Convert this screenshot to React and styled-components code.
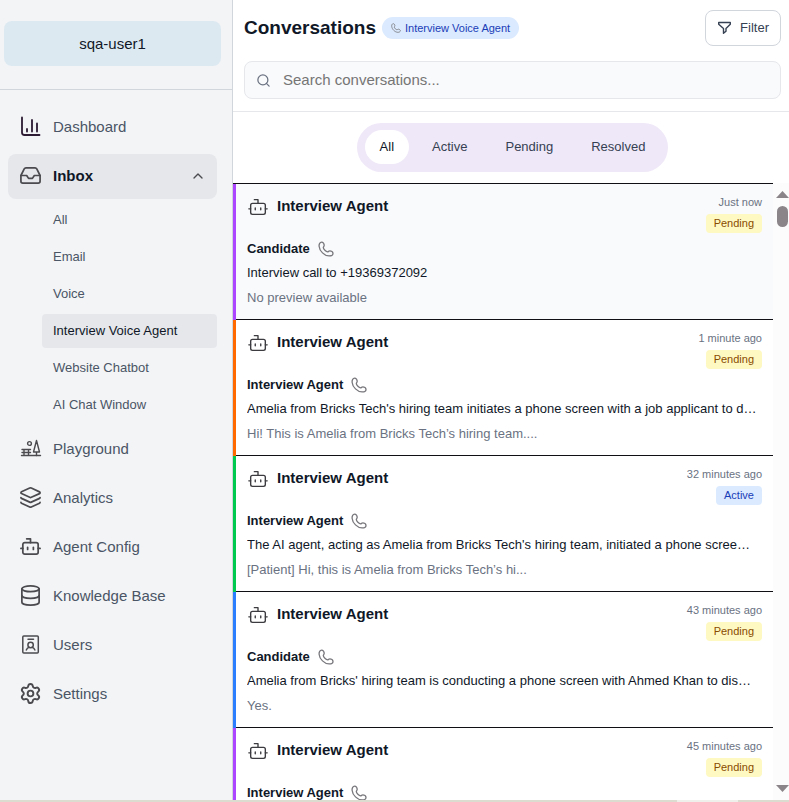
import React, { useState } from 'react';
import styled, { createGlobalStyle } from 'styled-components';
import { Inbox, Layers, Bot, Database, Settings, ChevronUp, ChevronDown, Search } from 'lucide-react';

const GlobalStyle = createGlobalStyle`
    * {
        box-sizing: border-box;
    }
    body {
        margin: 0;
        font-family: "Liberation Sans", Arial, sans-serif;
        color: #101828;
        background: #ffffff;
    }
    button, input {
        font-family: inherit;
    }
    h1, h2, p, ul {
        margin: 0;
        padding: 0;
    }
    ul {
        list-style: none;
    }
`;

const Page = styled.div`
    display: flex;
    flex-direction: column;
    height: 100vh;
    overflow: hidden;
`;

const Columns = styled.div`
    display: flex;
    flex: 1;
    min-height: 0;
`;

const BottomStrip = styled.div`
    display: flex;
    justify-content: flex-end;
    flex: none;
    height: 2px;
    padding-right: 51px;
    background: #dcddd0;
`;

const StripHandle = styled.div`
    width: 61px;
    background: #efefec;
`;

const Sidebar = styled.aside`
    flex: none;
    width: 233px;
    background: #f3f4f6;
    border-right: 1px solid #d1d5dc;
`;

const Account = styled.div`
    padding: 21px 11px 23px 4px;
    border-bottom: 1px solid #d1d5dc;
`;

const AccountButton = styled.button`
    display: block;
    width: 100%;
    height: 45px;
    border: none;
    border-radius: 8px;
    background: #dde9f1;
    color: #101828;
    font-size: 15px;
    cursor: pointer;
`;

const NavList = styled.ul`
    display: flex;
    flex-direction: column;
    gap: 4px;
    padding: 15px 15px 0 8px;
`;

const NavLink = styled.a`
    display: flex;
    align-items: center;
    gap: 11px;
    height: 45px;
    padding: 0 11px 2px;
    border-radius: 8px;
    font-size: 15px;
    text-decoration: none;
    font-weight: ${({ $active }) => ($active ? 700 : 400)};
    color: ${({ $active }) => ($active ? '#101828' : '#4a5565')};
    background: ${({ $active }) => ($active ? '#e5e7eb' : 'transparent')};
    & svg {
        flex: none;
        color: #4b4b4f;
    }
    & span {
        flex: 1;
    }
`;

const SubList = styled.ul`
    display: flex;
    flex-direction: column;
    gap: 3px;
    padding: 4px 0 1px 34px;
`;

const SubLink = styled.a`
    display: block;
    padding: 0 11px;
    border-radius: 4px;
    font-size: 13px;
    line-height: 34px;
    text-decoration: none;
    color: ${({ $active }) => ($active ? '#101828' : '#4a5565')};
    background: ${({ $active }) => ($active ? '#e5e7eb' : 'transparent')};
`;

const Main = styled.main`
    display: flex;
    flex-direction: column;
    flex: 1;
    min-width: 0;
`;

const Header = styled.header`
    padding: 10px 8px 12px 11px;
    border-bottom: 1px solid #e5e7eb;
`;

const TitleRow = styled.div`
    display: flex;
    align-items: center;
    gap: 6px;
    margin-bottom: 15px;
`;

const Title = styled.h1`
    font-size: 19px;
    line-height: 24px;
`;

const Chip = styled.span`
    display: flex;
    align-items: center;
    gap: 4px;
    height: 22px;
    padding: 0 9px;
    border-radius: 11px;
    background: #dbeafe;
    color: #193cb8;
    font-size: 11px;
    & svg {
        color: #77777c;
    }
`;

const FilterButton = styled.button`
    display: flex;
    align-items: center;
    gap: 8px;
    height: 36px;
    margin-left: auto;
    padding: 0 11px 2px;
    border: 1px solid #d1d5dc;
    border-radius: 8px;
    background: #ffffff;
    color: #364153;
    font-size: 13px;
    cursor: pointer;
`;

const SearchBox = styled.label`
    display: flex;
    align-items: center;
    gap: 12px;
    height: 38px;
    padding: 0 11px;
    border: 1px solid #e5e7eb;
    border-radius: 8px;
    background: #f9fafb;
    & svg {
        flex: none;
        color: #6a7282;
    }
`;

const SearchInput = styled.input`
    flex: 1;
    min-width: 0;
    padding: 0 0 2px;
    border: none;
    outline: none;
    background: none;
    font-size: 15px;
    color: #101828;
    &::placeholder {
        color: #757575;
    }
`;

const TabBar = styled.div`
    display: flex;
    justify-content: center;
    padding: 11px 8px 11px 11px;
`;

const Tabs = styled.div`
    display: flex;
    gap: 8px;
    padding: 7px 8px 8px;
    border-radius: 25px;
    background: #efe8f8;
`;

const Tab = styled.button`
    height: 34px;
    padding: 0 15px 2px;
    border: none;
    border-radius: 17px;
    font-size: 13px;
    cursor: pointer;
    color: ${({ $active }) => ($active ? '#101828' : '#364153')};
    background: ${({ $active }) => ($active ? '#ffffff' : 'transparent')};
`;

const ListArea = styled.div`
    display: flex;
    flex: 1;
    min-height: 0;
`;

const CardList = styled.ul`
    flex: 1;
    min-width: 0;
    overflow: hidden;
    border-top: 1px solid #101014;
`;

const Card = styled.li`
    padding: 11px 11px 10px;
    border-left: 3px solid ${({ $accent }) => $accent};
    background: ${({ $selected }) => ($selected ? '#f9fafb' : '#ffffff')};
    box-shadow: inset 0 -1px 0 #101014;
`;

const CardHead = styled.div`
    display: flex;
    justify-content: space-between;
    margin-bottom: 4px;
`;

const CardTitle = styled.div`
    display: flex;
    align-items: flex-end;
    gap: 8px;
    height: 23px;
    & svg {
        color: #3c3c40;
    }
    & h2 {
        font-size: 15px;
        line-height: 24px;
    }
`;

const CardStatus = styled.div`
    display: flex;
    flex-direction: column;
    align-items: flex-end;
    gap: 5px;
    font-size: 11px;
    line-height: 14px;
    color: #6a7282;
`;

const Badge = styled.span`
    padding: 0 8px;
    border-radius: 4px;
    line-height: 19px;
    color: ${({ $status }) => ($status === 'Active' ? '#193cb8' : '#894b00')};
    background: ${({ $status }) => ($status === 'Active' ? '#dbeafe' : '#fef9c2')};
`;

const Sender = styled.div`
    display: flex;
    align-items: center;
    gap: 8px;
    font-size: 13px;
    font-weight: 700;
    line-height: 24px;
    & svg {
        color: #77777c;
    }
`;

const Line = styled.p`
    overflow: hidden;
    white-space: nowrap;
    text-overflow: ellipsis;
    font-size: 13px;
    line-height: 24px;
    color: #101828;
`;

const Preview = styled(Line)`
    margin-top: 1px;
    color: #6a7282;
`;

const ScrollTrack = styled.div`
    display: flex;
    flex-direction: column;
    align-items: center;
    flex: none;
    width: 16px;
    padding: 8px 0 8px 3px;
    background: #fcfcfc;
    color: #8b8589;
`;

const ScrollThumb = styled.div`
    width: 11px;
    height: 21px;
    margin: 8px 0 auto;
    border-radius: 6px;
    background: #8b8589;
`;

const ChartIcon = () => (
    <svg width="23" height="23" viewBox="-1 0 23 23" fill="none" stroke="#2d1b33" strokeWidth="1.8" strokeLinecap="round" strokeLinejoin="round">
        <path d="M2 2.5v15q0 2.5 2.5 2.5h15" />
        <path d="M7 14v2.5M12 5v11.5M17 8.5v8" />
    </svg>
);

const ParkIcon = () => (
    <svg width="23" height="23" viewBox="-1 0 23 23" fill="none" stroke="currentColor" strokeWidth="1.4" strokeLinecap="round" strokeLinejoin="round">
        <path d="M1.5 18.5h19M2 12.5h8.5M2 15.5h8.5M4 12.5v6M8.500 12.5v6" />
        <circle cx="9.5" cy="6.5" r="1.9" />
        <path d="M16.5 3.5l-3 11.5h6zM16.5 15v3.5" />
    </svg>
);

const BadgeIcon = () => (
    <svg width="23" height="23" viewBox="-1 0 23 23" fill="none" stroke="currentColor" strokeWidth="1.5" strokeLinecap="round" strokeLinejoin="round">
        <rect x="2.8" y="3" width="15.5" height="17" rx="1" />
        <path d="M8 6.3h5.5" />
        <circle cx="10.6" cy="12" r="2.7" />
        <path d="M6.3 17q.8-2 2.8-2.7M14.9 17q-.8-2-2.8-2.7" />
    </svg>
);

const FunnelIcon = () => (
    <svg width="15" height="15" viewBox="0 0 15 15" fill="none" stroke="currentColor" strokeWidth="1.4" strokeLinejoin="round">
        <path d="M1.7 2.5h11.6v1.7L9 8.5v2.7L6.5 13.3V8.5L1.7 4.200z" />
    </svg>
);

const PhoneIcon = ({ size }) => (
    <svg width={size} height={size} viewBox="0 0 16 16" fill="none" stroke="currentColor" strokeWidth="1.3" strokeLinejoin="round">
        <path d="M1.1 5.2C.9 3 2 1.1 3.600 1.100c1.500 0 2.600 1.700 2.600 3.200 0 1-.9 1.500-.9 2.300 0 1.600 2.800 4.200 4.300 4.200.8 0 1.200-.9 2.200-.9 1.500 0 3.200 1.100 3.200 2.500 0 1.500-1.900 2.500-3.900 2.500C6.400 14.900 1.500 10 1.100 5.200z" />
    </svg>
);

const Arrow = ({ down }) => (
    <svg width="13" height="7" viewBox="0 0 13 7" fill="currentColor">
        <path d={down ? 'M0 0h13l-6.5 7z' : 'M0 7h13l-6.5-7z'} />
    </svg>
);

const inboxItems = ['All', 'Email', 'Voice', 'Interview Voice Agent', 'Website Chatbot', 'AI Chat Window'];

const navItems = [
    { label: 'Dashboard', icon: <ChartIcon /> },
    { label: 'Inbox', icon: <Inbox size={23} strokeWidth={1.8} />, children: inboxItems },
    { label: 'Playground', icon: <ParkIcon /> },
    { label: 'Analytics', icon: <Layers size={23} strokeWidth={1.8} /> },
    { label: 'Agent Config', icon: <Bot size={23} strokeWidth={1.8} /> },
    { label: 'Knowledge Base', icon: <Database size={23} strokeWidth={1.8} /> },
    { label: 'Users', icon: <BadgeIcon /> },
    { label: 'Settings', icon: <Settings size={23} strokeWidth={2} /> },
];

const tabs = ['All', 'Active', 'Pending', 'Resolved'];

const conversations = [
    {
        id: 1,
        accent: '#ad46ff',
        time: 'Just now',
        status: 'Pending',
        sender: 'Candidate',
        summary: 'Interview call to +19369372092',
        preview: 'No preview available',
    },
    {
        id: 2,
        accent: '#ff6900',
        time: '1 minute ago',
        status: 'Pending',
        sender: 'Interview Agent',
        summary: 'Amelia from Bricks Tech\'s hiring team initiates a phone screen with a job applicant to d…',
        preview: 'Hi! This is Amelia from Bricks Tech’s hiring team....',
    },
    {
        id: 3,
        accent: '#00c950',
        time: '32 minutes ago',
        status: 'Active',
        sender: 'Interview Agent',
        summary: 'The AI agent, acting as Amelia from Bricks Tech\'s hiring team, initiated a phone scree…',
        preview: '[Patient] Hi, this is Amelia from Bricks Tech’s hi...',
    },
    {
        id: 4,
        accent: '#2b7fff',
        time: '43 minutes ago',
        status: 'Pending',
        sender: 'Candidate',
        summary: 'Amelia from Bricks\' hiring team is conducting a phone screen with Ahmed Khan to dis…',
        preview: 'Yes.',
    },
    {
        id: 5,
        accent: '#ad46ff',
        time: '45 minutes ago',
        status: 'Pending',
        sender: 'Interview Agent',
        summary: '',
        preview: '',
    },
];

const NavItem = ({ item }) => {
    const [ open, setOpen ] = useState(true);

    const handleClick = (e) => {
        e.preventDefault();
        setOpen(!open);
    };

    return (
        <li>
            <NavLink href="#" $active={!!item.children} onClick={handleClick}>
                {item.icon}
                <span>{item.label}</span>
                {item.children && (open ? <ChevronUp size={16} /> : <ChevronDown size={16} />)}
            </NavLink>
            {item.children && open && (
                <SubList>
                    {item.children.map(label => (
                        <li key={label}>
                            <SubLink href="#" $active={label === 'Interview Voice Agent'}>{label}</SubLink>
                        </li>
                    ))}
                </SubList>
            )}
        </li>
    );
};

const Conversation = ({ item, selected }) => (
    <Card $accent={item.accent} $selected={selected}>
        <CardHead>
            <CardTitle>
                <Bot size={22} strokeWidth={1.5} />
                <h2>Interview Agent</h2>
            </CardTitle>
            <CardStatus>
                <span>{item.time}</span>
                <Badge $status={item.status}>{item.status}</Badge>
            </CardStatus>
        </CardHead>
        <Sender>
            {item.sender}
            <PhoneIcon size={16} />
        </Sender>
        <Line>{item.summary}</Line>
        <Preview>{item.preview}</Preview>
    </Card>
);

const App = () => {
    const [ tab, setTab ] = useState('All');
    const [ query, setQuery ] = useState('');

    const visible = conversations.filter(item => (
        (tab === 'All' || item.status === tab)
        && `${item.sender} ${item.summary}`.toLowerCase().includes(query.toLowerCase())
    ));

    return (
        <Page>
            <GlobalStyle />
            <Columns>
                <Sidebar>
                    <Account>
                        <AccountButton type="button">sqa-user1</AccountButton>
                    </Account>
                    <nav>
                        <NavList>
                            {navItems.map(item => <NavItem key={item.label} item={item} />)}
                        </NavList>
                    </nav>
                </Sidebar>
                <Main>
                    <Header>
                        <TitleRow>
                            <Title>Conversations</Title>
                            <Chip>
                                <PhoneIcon size={10} />
                                Interview Voice Agent
                            </Chip>
                            <FilterButton type="button">
                                <FunnelIcon />
                                Filter
                            </FilterButton>
                        </TitleRow>
                        <SearchBox>
                            <Search size={15} strokeWidth={2} />
                            <SearchInput
                                type="text"
                                aria-label="Search conversations"
                                placeholder="Search conversations..."
                                value={query}
                                onChange={e => setQuery(e.target.value)}
                            />
                        </SearchBox>
                    </Header>
                    <TabBar>
                        <Tabs>
                            {tabs.map(name => (
                                <Tab key={name} type="button" $active={name === tab} onClick={() => setTab(name)}>
                                    {name}
                                </Tab>
                            ))}
                        </Tabs>
                    </TabBar>
                    <ListArea>
                        <CardList>
                            {visible.map(item => (
                                <Conversation key={item.id} item={item} selected={item.id === 1} />
                            ))}
                        </CardList>
                        <ScrollTrack>
                            <Arrow />
                            <ScrollThumb />
                            <Arrow down />
                        </ScrollTrack>
                    </ListArea>
                </Main>
            </Columns>
            <BottomStrip>
                <StripHandle />
            </BottomStrip>
        </Page>
    );
};

export default App;
